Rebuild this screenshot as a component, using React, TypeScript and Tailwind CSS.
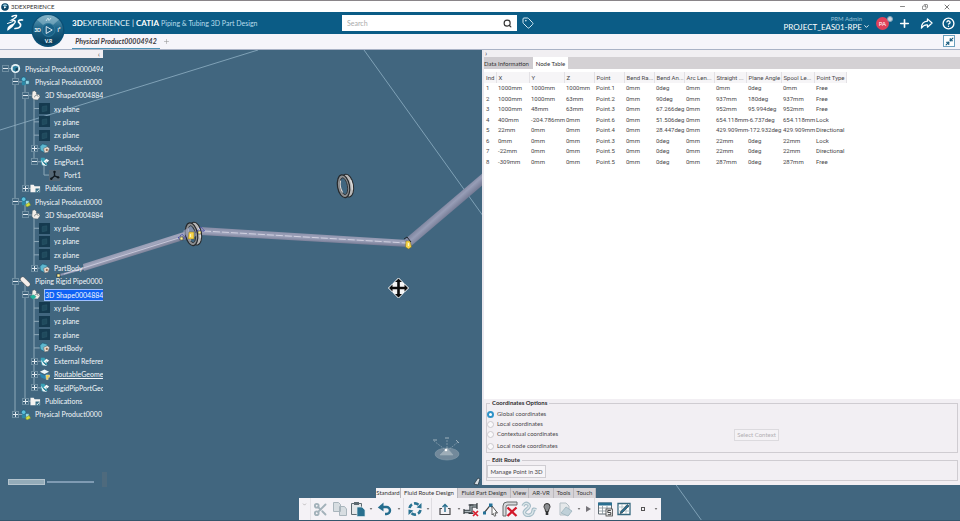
import type { ReactNode } from "react";
import { Search, Tag, Plus, Minus, X, Copy, Scissors, ChevronDown, CircleHelp, Minimize2 } from "lucide-react";

type Kind = "root" | "product" | "instance" | "shape" | "active" | "plane" | "body" | "port" | "axis" | "folder" | "pipe" | "geo" | "route";
type Node = { level: number; label: string; kind: Kind; box?: "+" | "-"; selected?: boolean; underline?: boolean };

const nodes: Node[] = [
  { level: 0, label: "Physical Product0000494", kind: "root", box: "-" },
  { level: 1, label: "Physical Product0000", kind: "product", box: "-" },
  { level: 2, label: "3D Shape0004884", kind: "shape", box: "-" },
  { level: 3, label: "xy plane", kind: "plane" },
  { level: 3, label: "yz plane", kind: "plane" },
  { level: 3, label: "zx plane", kind: "plane" },
  { level: 3, label: "PartBody", kind: "body", box: "+" },
  { level: 3, label: "EngPort.1", kind: "port", box: "-" },
  { level: 4, label: "Port1", kind: "axis" },
  { level: 2, label: "Publications", kind: "folder", box: "+" },
  { level: 1, label: "Physical Product0000", kind: "instance", box: "-" },
  { level: 2, label: "3D Shape0004884", kind: "shape", box: "-" },
  { level: 3, label: "xy plane", kind: "plane" },
  { level: 3, label: "yz plane", kind: "plane" },
  { level: 3, label: "zx plane", kind: "plane" },
  { level: 3, label: "PartBody", kind: "body", box: "+" },
  { level: 1, label: "Piping Rigid Pipe0000", kind: "pipe", box: "-" },
  { level: 2, label: "3D Shape0004884", kind: "active", box: "-", selected: true },
  { level: 3, label: "xy plane", kind: "plane" },
  { level: 3, label: "yz plane", kind: "plane" },
  { level: 3, label: "zx plane", kind: "plane" },
  { level: 3, label: "PartBody", kind: "body" },
  { level: 3, label: "External Referer", kind: "geo", box: "+" },
  { level: 3, label: "RoutableGeome", kind: "route", box: "+", underline: true },
  { level: 3, label: "RigidPipPortGeo", kind: "geo", box: "+" },
  { level: 2, label: "Publications", kind: "folder", box: "+" },
  { level: 1, label: "Physical Product0000", kind: "instance", box: "+" },
];

const indents = ["pl-px", "pl-[11px]", "pl-[21px]", "pl-[30px]", "pl-[40px]"];

function TreeIcon({ kind }: { kind: Kind }) {
  return (
    <svg viewBox="0 0 12 12" className="h-[11px] w-[11px] shrink-0" aria-hidden="true">
      {kind === "root" && (
        <>
          <circle cx="6" cy="6" r="5" fill="#e9f3f7" />
          <path d="M3 4 6 3l3 1v4L6 9.500 3 8z" fill="#2d7f9f" />
          <path d="M6 6v3l2.500-1V5z" fill="#173f55" />
        </>
      )}
      {(kind === "product" || kind === "instance") && (
        <>
          <circle cx="4" cy="3.500" r="2.500" fill="#5cc0dc" stroke="#185a78" strokeWidth=".7" />
          <rect x="2" y="6" width="4" height="4" rx="1" fill="#2b8aa8" />
          <rect x="6" y="5" width="4" height="4" rx="1" fill="#9bd9e8" stroke="#185a78" strokeWidth=".6" />
          {kind === "instance" && <path d="M6 9.500 10 7l1.500 3-4 2z" fill="#d4dc3f" stroke="#7e9222" strokeWidth=".5" />}
        </>
      )}
      {(kind === "shape" || kind === "active") && (
        <>
          <path d="M2.500 1.500 5 .8l2 1.700v2.200L10 5l1 2.500L8.500 11 4 10.500 2 8z" fill="#f4efe9" stroke="#4b5d68" strokeWidth=".6" />
          <path d="M5 8a2 2 0 0 1 4-.5" fill="none" stroke="#7b8588" strokeWidth=".9" />
          {kind === "active" && <path d="M0 8.500 3.500 6 7 8.500 3.500 11.500z" fill="#24b39a" />}
        </>
      )}
      {kind === "plane" && (
        <>
          <rect width="12" height="12" fill="#153a4f" />
          <path d="M3.500 4 8.500 3v5.500L3.500 9.500z" fill="#1f4a5d" stroke="#2c586b" strokeWidth=".6" />
        </>
      )}
      {kind === "body" && (
        <>
          <path d="M1 3.500 4 1l5 1.500v5L5 10 1.500 8z" fill="#5eb7cf" stroke="#1b5f7c" strokeWidth=".7" />
          <path d="m5 6 4-2 2.500 2L10 10l-4 1z" fill="#e9ddd3" stroke="#5b6165" strokeWidth=".6" />
          <circle cx="8.500" cy="7.500" r="1.200" fill="#96694f" />
        </>
      )}
      {(kind === "port" || kind === "geo") && (
        <>
          <path d="M2 2h4l1 2h2v6H3L2 6z" fill="#3aa2b8" />
          <path d="m5 6 3-3 3 2-3 3zM2 4l3 4 4 3-5-1z" fill="#f3f7f8" />
          <path d="M5 7l3 3M8 6l2 3" stroke="#234e60" strokeWidth=".8" />
        </>
      )}
      {kind === "axis" && (
        <>
          <rect width="12" height="12" fill="#566875" />
          <path d="M6 1.500v5L2.500 9.500M6 6.500l4 1.500" stroke="#10181d" strokeWidth="1.500" fill="none" />
          <circle cx="6" cy="2" r="1.300" fill="#10181d" />
          <circle cx="2.500" cy="9.500" r="1.300" fill="#10181d" />
          <circle cx="10" cy="8" r="1.300" fill="#10181d" />
        </>
      )}
      {kind === "folder" && (
        <>
          <path d="M.5 2H4l1 1.500h6V10H.5z" fill="#f5f3f1" />
          <path d="M6 6h4.500v4.500H6z" fill="#346e86" />
          <path d="m7 8.500 1 1L10 7" stroke="#fff" fill="none" />
        </>
      )}
      {kind === "pipe" && (
        <>
          <path d="M3 3.500 8.500 9" stroke="#5c5f63" strokeWidth="5.600" strokeLinecap="round" />
          <path d="M3 3.500 8.500 9" stroke="#f4eeea" strokeWidth="4.500" strokeLinecap="round" />
        </>
      )}
      {kind === "route" && (
        <>
          <path d="M1 3 6 .5 11 3 6 5.500z" fill="#eaf5f9" />
          <path d="M1 4.500l5 2.500 4-2v3.500L6 11 2 9z" fill="#2b86b0" />
          <path d="M7.500 6.500h4v2.500H10v2.500H8z" fill="#e8c94a" stroke="#f8f4e0" strokeWidth=".5" />
        </>
      )}
    </svg>
  );
}

const rowY = (i: number) => 6.65 + i * 13.3;
const guideX = [5, 15, 25, 34, 44];
const spans: [number, number, number][] = [
  [15, 0, 26], [25, 1, 9], [25, 10, 11], [25, 16, 25],
  [34, 2, 7], [34, 11, 15], [34, 17, 24], [44, 7, 8],
];

function Tree() {
  return (
    <aside className="relative flex w-[103px] shrink-0 flex-col">
      <div className="flex h-[8px] items-center justify-end bg-[#f1eff3] pr-[3px]">
        <button aria-label="Collapse tree" className="text-[8px] leading-[8px] text-[#555]">‹</button>
      </div>
      <div className="relative mt-[4px] h-[359px] overflow-hidden">
        <svg className="absolute inset-0 h-full w-full" aria-hidden="true">
          {spans.map(([x, a, b], i) => (
            <path key={i} d={`M${x} ${rowY(a)}V${rowY(b)}`} stroke="#8fa9b9" strokeWidth="1" />
          ))}
          {nodes.map((n, i) => (
            <path key={i} d={`M${guideX[n.level]} ${rowY(i)}h8`} stroke="#8fa9b9" strokeWidth="1" />
          ))}
        </svg>
        <ul className="relative grid h-full auto-rows-fr text-[7px] leading-[10px] text-[#f3f7fa]">
          {nodes.map((n, i) => (
            <li key={i} className={`flex min-h-0 items-center whitespace-nowrap ${indents[n.level]}`}>
              <span className="flex w-[8px] shrink-0 justify-center">
                {n.box && (
                  <button aria-label={`Toggle ${n.label}`} className="block h-[7px] w-[7px] border border-[#6f8ea1] bg-[#41667f]">
                    <svg viewBox="0 0 5 5" className="h-[5px] w-[5px]">
                      <path d={n.box === "+" ? "M0 2.500h5M2.500 0v5" : "M0 2.500h5"} stroke="#dfe8ee" strokeWidth="1" />
                    </svg>
                  </button>
                )}
              </span>
              <span className="ml-px mr-[4px]"><TreeIcon kind={n.kind} /></span>
              <span className={n.selected ? "flex-1 bg-[#0f62f5] outline outline-[#9fc0ff]" : n.underline ? "underline" : ""}>{n.label}</span>
            </li>
          ))}
        </ul>
      </div>
      <div className="mt-auto flex h-[6px] items-center gap-[2px] pl-[8px]">
        <span className="h-full w-[37px] border border-[#b4c4ce] bg-[#94acb9]" />
        <span className="h-[2px] w-[47px] bg-[#7f9bb3]" />
      </div>
    </aside>
  );
}

function Ring({ x, y }: { x: number; y: number }) {
  return (
    <g transform={`translate(${x} ${y}) rotate(-10)`}>
      <ellipse cx="2.500" cy="0" rx="6" ry="11.500" fill="#b9b9b9" stroke="#26292c" strokeWidth="1" />
      <ellipse cx="-1.500" cy="0" rx="6" ry="11.500" fill="#8d8f91" stroke="#26292c" strokeWidth="1.200" />
      <ellipse cx="-1.200" cy="0" rx="3.600" ry="8.500" fill="#41667f" stroke="#303336" strokeWidth=".9" />
      <path d="M-3.500-6c-1.500 4-1.500 8 0 12" stroke="#d8d4d2" strokeWidth="1.200" fill="none" />
      <path d="M6.500-5c1 4 1 7 0 10" stroke="#e4e4e4" strokeWidth="1" fill="none" />
    </g>
  );
}

function Scene() {
  return (
    <svg viewBox="0 50 960 471" preserveAspectRatio="xMidYMid slice" className="absolute inset-0 h-full w-full" aria-label="3D view">
      <defs>
        <linearGradient id="pipeA" x1="130" y1="245" x2="134" y2="257" gradientUnits="userSpaceOnUse">
          <stop offset="0" stopColor="#8187a0" /><stop offset=".5" stopColor="#a2a7be" /><stop offset="1" stopColor="#767b92" />
        </linearGradient>
        <linearGradient id="pipeB" x1="300" y1="232" x2="299.500" y2="242" gradientUnits="userSpaceOnUse">
          <stop offset="0" stopColor="#868ca6" /><stop offset=".5" stopColor="#9fa4bc" /><stop offset="1" stopColor="#70758f" />
        </linearGradient>
        <linearGradient id="pipeC" x1="441" y1="207" x2="449" y2="216" gradientUnits="userSpaceOnUse">
          <stop offset="0" stopColor="#7d849e" /><stop offset=".4" stopColor="#979db6" /><stop offset="1" stopColor="#6f758f" />
        </linearGradient>
      </defs>
      <rect y="50" width="960" height="471" fill="#41667f" />
      <path d="M0 130 258 50M364 50 702 521" stroke="#7fa1b6" strokeWidth="1" />
      <path d="m60 275 26-7" stroke="#8c94b0" strokeWidth="2" />
      <path d="m83 264 104-33 3 7-106 33z" fill="url(#pipeA)" />
      <path d="m64 274 118-37" stroke="#d3d2e2" strokeWidth=".8" />
      <path d="m200 227 208 13v7l-208-12z" fill="url(#pipeB)" />
      <path d="m204 231 202 12" stroke="#dddcea" strokeWidth=".8" strokeDasharray="7 2" />
      <path d="m404 240 80-68v12l-74 63z" fill="url(#pipeC)" />
      <Ring x={193} y={234} />
      <Ring x={345} y={186} />
      <path d="m183 231 8-5 6 9-8 6z" fill="#9a9fbb" opacity=".7" />
      <g fill="#f7d54b" stroke="#7b6419" strokeWidth=".5">
        <path d="M189 232h5v7h-6zM406 241l4 0 1.500 6-3 2-3-2z" />
      </g>
      <path d="M190.500 234v3M408.500 243v3" stroke="#fff6bd" strokeWidth="1.200" />
      <path d="m178 238 4-4 4 4zM197 231l4-4 4 4z" fill="none" stroke="#3c41b2" strokeWidth=".8" strokeDasharray="2 1" />
      <g fill="#fff39a" stroke="#222" strokeWidth=".5">
        <rect x="180" y="237" width="3" height="3" /><rect x="198" y="231" width="3" height="3" /><rect x="57" y="274" width="3" height="3" />
      </g>
      <path d="m404 239 3-2 4 5" fill="none" stroke="#20262c" strokeWidth="1" />
      <g transform="translate(398.500 288)">
        <path d="M0-10 4.500-5.500V-4.500H5.500L10 0 5.500 4.500H4.500V5.500L0 10-4.500 5.500V4.500H-5.500L-10 0-5.500-4.500H-4.500V-5.500z" fill="#f4f4f4" stroke="#fff" strokeWidth="1" />
        <path d="M0-9.500 3.500-6H1.300v4.700H6v-2.200L9.500 0 6 3.500V1.300H1.300V6h2.200L0 9.500-3.500 6h2.200V1.300H-6v2.200L-9.500 0-6-3.500v2.200h4.700V-6h-2.200z" fill="#0b0b0b" />
      </g>
      <g transform="translate(447 450)" stroke="#9fb1bd" fill="none" strokeWidth=".6">
        <ellipse cx="0" cy="4" rx="12" ry="6" fill="#8799a7" opacity=".7" />
        <path d="m0 1-13-10M0 1v-12M0 1l11-9" strokeDasharray="2 1" />
        <path d="M-14-10h4M9-10l3 3M-2-12h4" strokeWidth="1" />
        <path d="m-7 5 7-7 6 7z" fill="#9eadb8" />
        <circle cx="-1" cy="0" r="1.300" fill="#fff" stroke="none" />
      </g>
      <path d="m474 484 4-6 2 1-2 6z" fill="#d5dde3" stroke="#1d2d38" strokeWidth=".7" />
      <rect x="102" y="472" width="5" height="15" fill="#566c7c" opacity=".6" />
    </svg>
  );
}

const columns: [string, string][] = [
  ["Ind", "w-[12px]"], ["X", "w-[33px]"], ["Y", "w-[35px]"], ["Z", "w-[30px]"], ["Point", "w-[30px]"], ["Bend Ra...", "w-[30px]"],
  ["Bend An...", "w-[30px]"], ["Arc Len...", "w-[30px]"], ["Straight ...", "w-[32px]"], ["Plane Angle", "w-[35px]"], ["Spool Le...", "w-[33px]"], ["Point Type", "w-[32px]"],
];
const rows = [
  ["1", "1000mm", "1000mm", "1000mm", "Point.1", "0mm", "0deg", "0mm", "0mm", "0deg", "0mm", "Free"],
  ["2", "1000mm", "1000mm", "63mm", "Point.2", "0mm", "90deg", "0mm", "937mm", "180deg", "937mm", "Free"],
  ["3", "1000mm", "48mm", "63mm", "Point.3", "0mm", "67.266deg", "0mm", "952mm", "95.994deg", "952mm", "Free"],
  ["4", "400mm", "-204.786mm", "0mm", "Point.6", "0mm", "51.506deg", "0mm", "654.118mm", "-6.737deg", "654.118mm", "Lock"],
  ["5", "22mm", "0mm", "0mm", "Point.4", "0mm", "28.447deg", "0mm", "429.909mm", "-172.932deg", "429.909mm", "Directional"],
  ["6", "0mm", "0mm", "0mm", "Point.3", "0mm", "0deg", "0mm", "22mm", "0deg", "22mm", "Lock"],
  ["7", "-22mm", "0mm", "0mm", "Point.5", "0mm", "0deg", "0mm", "22mm", "0deg", "22mm", "Directional"],
  ["8", "-309mm", "0mm", "0mm", "Point.5", "0mm", "0deg", "0mm", "287mm", "0deg", "287mm", "Free"],
];

function Panel() {
  return (
    <section className="relative flex min-w-0 flex-1 flex-col border-l-2 border-[#e9e8ee] bg-white text-[6px] leading-[10px] text-[#4a484b]">
      <div className="flex h-[7px] items-center bg-[#f1eff2] pl-px">
        <button aria-label="Collapse panel" className="text-[8px] leading-[7px]">›</button>
      </div>
      <div role="tablist" className="flex h-[12px] bg-[#d4d1d4] leading-[13px] text-[#333]">
        <button role="tab" aria-selected="false" className="w-[49px] whitespace-nowrap bg-[#cfccd0] text-left text-[6px]">Data Information</button>
        <button role="tab" aria-selected="true" className="w-[35px] whitespace-nowrap bg-white text-center text-[6px]">Node Table</button>
      </div>
      <div className="flex-1 pt-[3px]">
        <table className="h-[95px] w-[362px] table-fixed border-collapse font-[Roboto,sans-serif]">
          <thead>
            <tr className="h-[11px] bg-[#f6f5f7]">
              {columns.map(([name, w]) => (
                <th key={name} scope="col" className={`${w} whitespace-nowrap border-r border-[#e3e1e5] p-0 pl-[2px] text-left font-normal`}>{name}</th>
              ))}
            </tr>
          </thead>
          <tbody>
            {rows.map((r) => (
              <tr key={r[0]}>
                {r.map((c, i) => <td key={i} className="whitespace-nowrap p-0 pl-[2px]">{c}</td>)}
              </tr>
            ))}
          </tbody>
        </table>
      </div>
      <div className="bg-[#f2eff3] px-[2px] pb-[4px]">
        <fieldset className="relative h-[54px] border border-[#cfccd1]">
          <legend className="ml-[3px] h-[8px] px-[2px] font-bold leading-[8px] text-[#2d2b2e]">Coordinates Options</legend>
          <div className="flex justify-between pt-[2px]">
            <div className="grid content-start">
              {["Global coordinates", "Local coordinates", "Contextual coordinates", "Local node coordinates"].map((t, i) => (
                <label key={t} className={`flex h-[10px] items-center gap-[3px] ${i === 3 ? "mt-[2px]" : ""}`}>
                  <input type="radio" name="coords" defaultChecked={i === 0} className="h-[7px] w-[7px] appearance-none rounded-full border border-[#cbc9ce] bg-[#faf9fb] checked:border-2 checked:border-[#2f93c8] checked:bg-white" />
                  {t}
                </label>
              ))}
            </div>
            <button disabled className="mr-[178px] mt-[20px] h-[12px] w-[45px] border border-[#dcdade] bg-[#f4f2f5] text-[#b1afb3]">Select Context</button>
          </div>
        </fieldset>
        <fieldset className="mt-[3px] h-[25px] border border-[#cfccd1]">
          <legend className="ml-[3px] h-[8px] px-[2px] font-bold leading-[8px] text-[#2d2b2e]">Edit Route</legend>
          <button className="mt-px block h-[13px] w-[59px] border border-[#cfcdd2] bg-[#f7f5f8] text-[6px] leading-[11px]">Manage Point in 3D</button>
        </fieldset>
      </div>
    </section>
  );
}

function Tool({ label, w, children }: { label: string; w: string; children: ReactNode }) {
  return <button aria-label={label} className={`flex h-full shrink-0 items-center justify-center ${w}`}>{children}</button>;
}
function Caret({ w }: { w: string }) {
  return (
    <Tool label="More options" w={w}>
      <svg viewBox="0 0 4 3" className="h-[2px] w-[4px]"><path d="M0 0h4L2 3z" fill="#777" /></svg>
    </Tool>
  );
}
function Glyph({ children }: { children: ReactNode }) {
  return <svg viewBox="0 0 16 16" fill="none" className="h-[16px] w-[16px] shrink-0" aria-hidden="true">{children}</svg>;
}

function ActionBar() {
  return (
    <footer className="relative flex flex-col items-center">
      <div className="w-[362px] pl-[77px] pt-[3px]">
        <div role="tablist" className="flex h-[10px] w-[221px] text-[6px] leading-[10px] text-[#333]">
          {[["Standard", "w-[25px]"], ["Fluid Route Design", "w-[57px]"], ["Fluid Part Design", "w-[53px]"], ["View", "w-[18px]"], ["AR-VR", "w-[25px]"], ["Tools", "w-[20px]"], ["Touch", "w-[22px]"]].map(([t, w], i) => (
            <button role="tab" aria-selected={i === 1} key={t} className={`${w} shrink-0 whitespace-nowrap border-r border-[#bbb8bd] text-center ${i < 2 ? "bg-[#f4f2f5]" : "bg-[#d6d3d7]"}`}>{t}</button>
          ))}
        </div>
      </div>
      <div className="flex h-[22px] w-[362px] items-center bg-[#f4f2f6]">
        <span className="flex h-full w-[12px] justify-center border-r border-[#e4e2e6] pt-[4px]"><ChevronDown size={5} color="#777" /></span>
        <Tool label="Cut" w="w-[19px]"><Scissors size={15} color="#a3b2ba" strokeWidth={3} /></Tool>
        <Tool label="Copy" w="w-[19px]">
          <Glyph><path d="M1.500 1.500h5l2 2v7h-7zM7.500 5.500h5l2 2.500v6.500h-7z" fill="#d7dde1" stroke="#a9b5bc" /></Glyph>
        </Tool>
        <Tool label="Paste" w="w-[18px]">
          <Glyph><path d="M1.500 2.500h10v11h-10z" fill="#e4e7e9" stroke="#5d6a71" /><path d="M4 1h5v3H4z" fill="#5d6a71" /><path d="M7 6h5l3 3v6.500H7z" fill="#28708f" stroke="#dce9ee" strokeWidth=".7" /></Glyph>
        </Tool>
        <Caret w="w-[8px]" />
        <Tool label="Undo" w="w-[20px]">
          <Glyph><path d="M3 6h6.500a3.500 3.500 0 0 1 0 7H8" stroke="#256d8e" strokeWidth="2.400" /><path d="m.8 6.500 5.700-5v9z" fill="#256d8e" /></Glyph>
        </Tool>
        <Caret w="w-[8px]" />
        <Tool label="Update" w="w-[22px] border-l border-[#dedce1]">
          <Glyph><path d="M2.500 7A5.500 5.500 0 0 1 5 3.300M7 2.500a5.500 5.500 0 0 1 4.500 1.200M13.500 9a5.500 5.500 0 0 1-2.500 3.700M9 13.500a5.500 5.500 0 0 1-4.500-1.200" stroke="#2b7392" strokeWidth="2.600" /><path d="M9.500 6.500 14.500 2v5.500zM6.500 9.500 1.500 14V8.500z" fill="#2b7392" /></Glyph>
        </Tool>
        <Caret w="w-[6px]" />
        <Tool label="Share" w="w-[26px] border-l border-[#dedce1]">
          <Glyph><path d="M5 7.500H3v6h10v-6h-2" stroke="#4a4a4d" strokeWidth="1.200" /><path d="M8 11V3.500M5.500 6 8 3.500 10.500 6" stroke="#2b6f8e" strokeWidth="1.400" /></Glyph>
        </Tool>
        <Caret w="w-[4px]" />
        <Tool label="Remove pipe" w="w-[20px]">
          <Glyph><path d="M1 10.500h7V5h6" stroke="#515a5f" strokeWidth="3.500" /><path d="M1 10.500h7V5h6" stroke="#aab4b9" strokeWidth="1" /><path d="M1 8v5M14 2v6M5.500 4h5M5.500 12.500h5" stroke="#33393d" strokeWidth="1.200" /><path d="m10 10 5 5m0-5-5 5" stroke="#d91e2e" strokeWidth="1.700" /></Glyph>
        </Tool>
        <Tool label="Edit node" w="w-[19px]">
          <Glyph><path d="M1 12 7.500 4 14 12" stroke="#444" strokeWidth="1.200" /><path d="M0 10.500h3v3H0zM6 2.500h3.500V6H6z" fill="#267399" /><path d="m9 5 5.500 7-2.500-.2.800 3-1.500.4-1-2.700L9 14z" fill="#fff" stroke="#444" strokeWidth=".8" /></Glyph>
        </Tool>
        <Tool label="Delete route" w="w-[20px]">
          <Glyph><path d="M1 15V5q0-4 4-4h10v3H6Q4 4 4 6v9z" fill="#d8dadc" stroke="#666a6d" /><path d="m5.500 6.500 9 8.500m0-8.500-9 8.500" stroke="#d2192b" strokeWidth="2.300" /></Glyph>
        </Tool>
        <Tool label="Flexible route" w="w-[18px]">
          <Glyph><path d="M2 5q2-4 5-2t-1 5-2 5 5 1 3-4 3-1" stroke="#a5bcc7" strokeWidth="3.500" /><path d="M2 5q2-4 5-2t-1 5-2 5 5 1 3-4 3-1" stroke="#dce6ea" strokeWidth="1.300" /></Glyph>
        </Tool>
        <Tool label="Hint" w="w-[18px]">
          <Glyph><path d="M8 2.500a3 3 0 0 1 3 3c0 1.700-1.500 2.500-1.500 5h-3C6.500 8 5 7.200 5 5.500a3 3 0 0 1 3-3z" fill="#8b8d90" stroke="#333" /><path d="M6.700 11h2.600v3H6.700z" fill="#2f3033" /></Glyph>
        </Tool>
        <Tool label="Export" w="w-[20px]">
          <Glyph><path d="M2 2h6l3 3v9H2z" fill="#e5e8ea" stroke="#b3bec4" /><path d="m3 12 5-6 6 4-4 5z" fill="#bfd0d8" stroke="#9cb2bd" strokeWidth=".8" /></Glyph>
        </Tool>
        <Caret w="w-[6px]" />
        <Tool label="Next tools" w="w-[12px]"><svg viewBox="0 0 5 6" className="h-[6px] w-[5px]"><path d="M0 0v6l5-3z" fill="#77757a" /></svg></Tool>
        <Tool label="Node table" w="w-[20px] border-l border-[#dedce1]">
          <Glyph><path d="M1.500 2h13v11h-13z" fill="#fff" stroke="#5f6b72" /><path d="M1 1.500h14v3H1z" fill="#2a6f91" /><path d="M2 7h12M2 10h12M5.500 5v8M10 5v8" stroke="#87939a" strokeWidth=".8" /><rect x="9" y="8" width="6.500" height="7" fill="#eee" stroke="#444" strokeWidth=".8" /><path d="M13.800 9.500h-3v2h3v2.200h-3" stroke="#333" strokeWidth=".9" /></Glyph>
        </Tool>
        <Tool label="Edit table" w="w-[20px]">
          <Glyph><path d="M2 2.500h12v11H2z" fill="#fff" stroke="#35677e" strokeWidth="1.300" /><path d="M2 6h12M2 10h12M6 3v10M10 3v10" stroke="#a7bac3" strokeWidth=".8" /><path d="m4 12.500.7-2L11.500 3.500l1.500 1.500L6 12z" fill="#2a6f91" stroke="#23333c" strokeWidth=".6" /></Glyph>
        </Tool>
        <Tool label="Stop" w="w-[18px]"><span className="h-[4px] w-[4px] border border-[#555]" /></Tool>
        <Caret w="w-[7px]" />
      </div>
      <div className="h-px w-full bg-[#35566c]" />
    </footer>
  );
}

function Compass() {
  return (
    <button aria-label="Compass" className="absolute left-[31px] top-0 z-10 h-[36px] w-[34px]">
      <svg viewBox="0 0 34 36" className="h-full w-full">
        <defs>
          <linearGradient id="ball" x1="0" y1="0" x2="0" y2="1">
            <stop offset="0" stopColor="#6ba4bc" /><stop offset=".45" stopColor="#1d6488" /><stop offset="1" stopColor="#063b5b" />
          </linearGradient>
        </defs>
        <circle cx="17" cy="18.500" r="16.500" fill="#0b4f75" />
        <circle cx="17" cy="18" r="15" fill="url(#ball)" />
        <path d="M6 7.500Q17-1 28 7.500L22 13q-5-4-10 0z" fill="#9cc4d3" opacity=".5" />
        <circle cx="17.500" cy="18" r="6.500" fill="#1a6288" stroke="#3a82a2" strokeWidth=".7" />
        <path d="m15.200 14.500 6 3.500-6 3.500z" fill="#1d5d80" stroke="#f0f6f9" strokeWidth=".9" />
        <path d="m15 9 2-3 1 2.500L20 6" stroke="#d3e6ee" strokeWidth=".9" fill="none" />
        <g fill="#fff" fontSize="5" fontWeight="700" textAnchor="middle"><text x="6.500" y="20">3D</text><text x="28" y="20">i²</text><text x="17.500" y="31">V.R</text></g>
      </svg>
    </button>
  );
}

export default function App() {
  return (
    <div className="flex h-screen min-h-[480px] flex-col overflow-hidden bg-[#41667f] font-[Lato,'Noto_Sans',sans-serif]">
      <div className="flex h-[12px] shrink-0 items-center border-t border-[#8a8589] bg-white pl-px text-[7px] text-[#333]">
        <svg viewBox="0 0 8 8" className="h-[8px] w-[8px]"><circle cx="4" cy="4" r="3.800" fill="#0c4668" /><path d="M1.500 2.500Q4 0 6.500 2.500L4 4z" fill="#8cc0d6" /><path d="m3 3.500 2.500 1L3 5.500z" fill="#fff" /></svg>
        <span className="ml-[2px] text-[6px] leading-[10px]">3DEXPERIENCE</span>
        <div className="ml-auto flex pr-[9px]">
          <button aria-label="Minimize" className="flex w-[22px] items-center justify-center"><Minus size={7} /></button>
          <button aria-label="Restore" className="flex w-[23px] items-center justify-center"><Copy size={6} className="-scale-x-100" /></button>
          <button aria-label="Close" className="flex w-[15px] justify-end"><X size={8} /></button>
        </div>
      </div>
      <div className="relative shrink-0">
        <Compass />
        <header className="flex h-[22px] items-center bg-[#0b5c86] text-white">
          <div className="flex w-[342px] shrink-0 items-center pl-[6px]">
            <svg viewBox="0 0 18 18" className="h-[18px] w-[18px]" fill="none" stroke="#fff" strokeLinecap="round">
              <path d="M6 2.500Q9 1 10.500 1.500 11 3 6 6q4 0 3 2.500Q6.500 13 2 15.500q0-3 5-5" strokeWidth="1.500" />
              <path d="M16.500 6Q12 5.500 12.500 8q2.500 2 2 4-1 2.500-5.500 2.500" strokeWidth="1.700" />
              <path d="M1.500 9.500 7 7.500" strokeWidth="1" />
            </svg>
            <h1 className="ml-[48px] flex items-center gap-[2px] whitespace-nowrap text-[8px] leading-[12px] text-[#b9dcec]">
              <span className="text-[#e4f1f7]"><b className="text-white">3D</b>EXPERIENCE | <b className="text-white">CATIA</b></span>
              <span className="text-[7px]">Piping &amp; Tubing 3D Part Design</span>
            </h1>
          </div>
          <label className="flex h-[16px] w-[175px] shrink-0 items-center bg-white pl-[5px] pr-[5px]">
            <input type="search" placeholder="Search" aria-label="Search" className="min-w-0 flex-1 text-[7px] leading-[10px] text-[#333] outline-none placeholder:text-[#aaa]" />
            <Search size={9} color="#333" strokeWidth={3} />
          </label>
          <button aria-label="Tags" className="ml-[5px]"><Tag size={12} color="#d5eaf3" strokeWidth={2} /></button>
          <div className="ml-auto flex items-center pr-[5px]">
            <div className="flex flex-col items-end">
              <span className="pr-[8px] text-[6px] leading-[7px] text-[#9cc4d8]">PRM Admin</span>
              <button className="flex items-center gap-px whitespace-nowrap text-[8px] leading-[10px]">PROJECT_EAS01-RPE <ChevronDown size={7} strokeWidth={3} /></button>
            </div>
            <span className="relative ml-[6px] flex h-[13px] w-[13px] items-center justify-center rounded-full bg-[#e0415a] text-[6px] leading-[13px]">
              PA<span className="absolute -right-[4px] -top-px h-[6px] w-[6px] rounded-full border border-[#7fa5bb] bg-[#cfd5dd]" />
            </span>
            <button aria-label="Add" className="ml-[9px]"><Plus size={13} strokeWidth={3} /></button>
            <button aria-label="Share" className="ml-[9px]">
              <svg viewBox="0 0 14 14" className="h-[13px] w-[13px]" fill="none" stroke="#fff" strokeWidth="1.300" strokeLinejoin="round"><path d="M8 2l5 4.500L8 11V8.500Q4 8 1.500 12 1.500 5 8 4.500z" /></svg>
            </button>
            <button aria-label="Help" className="ml-[9px]"><CircleHelp size={13} strokeWidth={2.5} /></button>
          </div>
        </header>
        <div className="flex h-[16px] items-stretch justify-between border-b border-[#aab3c6] bg-[#f6f5fa]">
          <div role="tablist" className="ml-[72px] flex items-center">
            <button role="tab" aria-selected="true" className="h-full w-[88px] whitespace-nowrap border-b border-[#4d93b5] text-center text-[7px] font-bold italic leading-[13px] text-[#3a383d]">Physical Product00004942</button>
            <button aria-label="New tab" className="ml-[3px]"><Plus size={7} color="#999" /></button>
          </div>
          <button aria-label="Exit full view" className="mr-[5px] mt-px flex h-[12px] w-[12px] items-center justify-center border border-[#6ba0be] bg-white"><Minimize2 size={9} color="#14587c" strokeWidth={3} /></button>
        </div>
      </div>
      <main className="relative flex min-h-0 flex-1 flex-col">
        <Scene />
        <div className="relative flex min-h-0 flex-1">
          <div className="flex w-[482px] shrink-0"><Tree /></div>
          <Panel />
        </div>
        <ActionBar />
      </main>
    </div>
  );
}
